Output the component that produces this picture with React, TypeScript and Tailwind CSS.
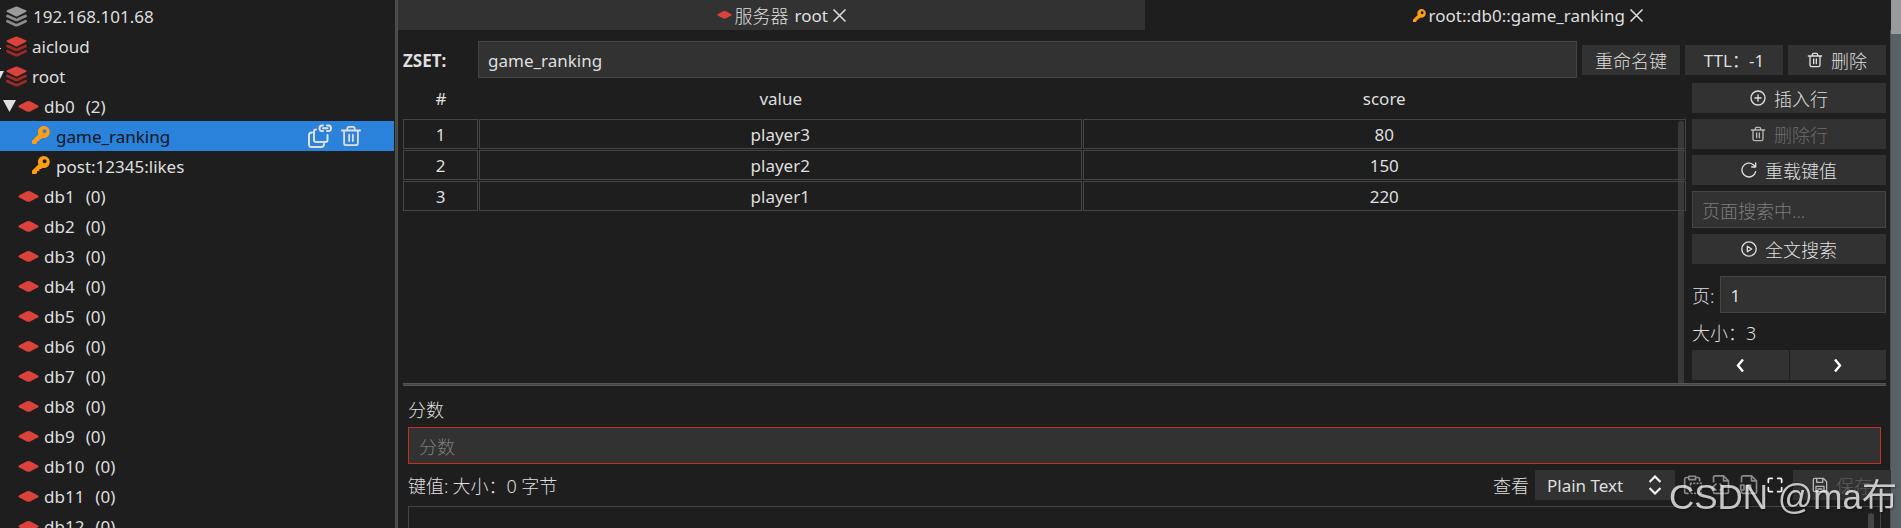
import React, { useState } from 'react';
import { createPortal } from 'react-dom';

interface KeyNode {
  name: string;
  selected?: boolean;
}

interface Row {
  id: number;
  value: string;
  score: number;
}

const KEYS: KeyNode[] = [
  { name: 'game_ranking', selected: true },
  { name: 'post:12345:likes' },
];

const EMPTY_DBS = ['db1', 'db2', 'db3', 'db4', 'db5', 'db6', 'db7', 'db8', 'db9', 'db10', 'db11', 'db12'];

const ROWS: Row[] = [
  { id: 1, value: 'player3', score: 80 },
  { id: 2, value: 'player2', score: 150 },
  { id: 3, value: 'player1', score: 220 },
];

const Stroke: React.FC<{
  className?: string;
  width?: number;
  children: React.ReactNode;
}> = ({ className = 'size-[18px]', width = 2, children }) => (
  <svg
    viewBox="0 0 24 24"
    fill="none"
    stroke="currentColor"
    strokeWidth={width}
    strokeLinecap="round"
    strokeLinejoin="round"
    className={`shrink-0 ${className}`}
    aria-hidden="true"
  >
    {children}
  </svg>
);

const ServerIcon: React.FC<{ offline?: boolean }> = ({ offline }) => (
  <svg viewBox="0 0 21 21" className="size-[21px] shrink-0" aria-hidden="true">
    <path
      d="M9.500 .7 Q10.500 .2 11.500 .7 L19.800 4.300 Q21.200 5.200 19.800 6.100 L11.500 10.200 Q10.500 10.700 9.500 10.200 L1.200 6.100 Q-.2 5.200 1.200 4.300 Z"
      fill={offline ? '#9b9b9b' : '#dc423c'}
    />
    <path
      d="M1.500 10 L9.500 13.600 Q10.500 14 11.500 13.600 L19.500 10 M1.500 15.200 L9.500 18.900 Q10.500 19.300 11.500 18.900 L19.500 15.200"
      fill="none"
      stroke={offline ? '#8c8c8c' : '#9e2a27'}
      strokeWidth="2.800"
      strokeLinecap="round"
    />
  </svg>
);

const DbIcon: React.FC<{ className?: string }> = ({ className = 'w-[21px]' }) => (
  <svg viewBox="0 0 21 11" className={`shrink-0 ${className}`} aria-hidden="true">
    <path
      d="M10.5 0 Q11.6 0 12.6 .4 L20 4.4 Q21.2 5.3 20 6.2 L12.6 10.2 Q10.5 11.2 8.4 10.2 L1 6.2 Q-.2 5.3 1 4.4 L8.4 .4 Q9.4 0 10.5 0 Z"
      fill="#dc423c"
    />
  </svg>
);

const KeyIcon: React.FC<{ className?: string }> = ({ className = 'size-[18px]' }) => (
  <svg viewBox="0 0 18 18" className={`shrink-0 ${className}`} aria-hidden="true">
    <path
      fillRule="evenodd"
      d="M11.8 0 A6 6 0 0 1 17.8 6 A6 6 0 0 1 10.4 11.8 L9.2 13 H7.4 V15 H5.2 V16.6 L4 18 H.8 Q0 18 0 17.2 V14.8 L6.4 8.4 A6 6 0 0 1 11.8 0 Z M12.6 3.2 A2 2 0 1 0 12.6 7.2 A2 2 0 1 0 12.6 3.2 Z"
      fill="#ff9e12"
    />
  </svg>
);

const TrashIcon: React.FC<{ className?: string }> = ({ className }) => (
  <Stroke className={className}>
    <path d="M2 6h20M8 6V4q0-2 2-2h4q2 0 2 2v2M4.500 6v13.500q0 2.500 2.500 2.500h10q2.500 0 2.500-2.500V6M10 10.500v7M14 10.500v7" />
  </Stroke>
);

const CopyLinkIcon = () => (
  <Stroke className="size-6" width={2}>
    <path d="M8 5.500q-2 0-2 2V16q0 2 2 2h9.500q2 0 2-2v-5M4 8.500q-3 0-3 2.500v9.500q0 2.500 2.500 2.500H13q3 0 3-3" />
    <path d="M15 1.500h-1q-2.500 0-2.500 2.800T14 7h1M19 1.500h1.500q2.500 0 2.500 2.800T20.500 7H19M15 4.300h4.500" />
  </Stroke>
);

const CloseIcon = () => (
  <svg viewBox="0 0 13 13" className="size-[13px]" stroke="currentColor" strokeWidth="1.500" aria-hidden="true">
    <path d="M.5 .5 12.500 12.500M12.500 .5 .5 12.500" />
  </svg>
);

const ActionButton: React.FC<{
  children: React.ReactNode;
  className?: string;
  disabled?: boolean;
  label?: string;
}> = ({ children, className = '', disabled, label }) => (
  <button
    type="button"
    disabled={disabled}
    aria-label={label}
    className={`flex h-[30px] items-center justify-center gap-2 bg-[#323232] ${className}`}
  >
    {children}
  </button>
);

const Caption: React.FC<{ className?: string; children: React.ReactNode }> = ({ className = '', children }) => (
  <span className={`pt-0.5 text-lg font-light leading-6 ${className}`}>{children}</span>
);

const DbLabel: React.FC<{ name: string; count: number }> = ({ name, count }) => (
  <span className="flex gap-[11px] pt-0.5">
    <span>{name}</span>
    <span>({count})</span>
  </span>
);

const Sidebar = () => (
  <nav className="w-[394px] shrink-0 overflow-hidden pt-px">
    <div className="flex h-[30px] items-center gap-1.5 pl-1.5">
      <ServerIcon offline />
      <span className="pt-0.5">192.168.101.68</span>
    </div>
    <div className="relative flex h-[30px] items-center gap-[5px] pl-1.5">
      <span className="absolute left-0 top-[17px] h-px w-px bg-[#dfdfdf]" />
      <ServerIcon />
      <span className="pt-0.5">aicloud</span>
    </div>
    <div className="relative flex h-[30px] items-center gap-[5px] pl-1.5">
      <svg viewBox="0 0 4 12" className="absolute left-0 top-2.5 h-3 w-1" aria-hidden="true">
        <path d="M0 0H4L0 8Z" fill="#dfdfdf" />
      </svg>
      <ServerIcon />
      <span className="pt-0.5">root</span>
    </div>
    <div className="flex h-[30px] items-center gap-[5px] pl-[3px]">
      <div className="flex items-center gap-0.5">
        <svg viewBox="0 0 13 12" className="h-3 w-[13px]" aria-hidden="true">
          <path d="M0 0H13L6.500 12Z" fill="#dfdfdf" />
        </svg>
        <DbIcon />
      </div>
      <DbLabel name="db0" count={2} />
    </div>
    {KEYS.map((k) => (
      <div
        key={k.name}
        className={`flex h-[30px] items-center gap-1.5 pl-8 ${k.selected ? 'bg-[#2a82da] text-[#10161d]' : ''}`}
      >
        <KeyIcon className="mb-0.5 size-[18px]" />
        <span className="pt-0.5">{k.name}</span>
        {k.selected && (
          <div className="ml-auto mr-8 flex items-center gap-2 text-[#dfdfdf]">
            <button type="button" aria-label="Copy key name">
              <CopyLinkIcon />
            </button>
            <button type="button" aria-label="Delete key">
              <TrashIcon className="size-[22px]" />
            </button>
          </div>
        )}
      </div>
    ))}
    {EMPTY_DBS.map((db) => (
      <div key={db} className="flex h-[30px] items-center gap-[5px] pl-[18px]">
        <DbIcon />
        <DbLabel name={db} count={0} />
      </div>
    ))}
  </nav>
);

const TabBar = () => (
  <div className="flex h-[30px]">
    <div className="flex flex-1 items-center justify-center gap-[3px] bg-[#323232] pl-5">
      <DbIcon className="w-[15px]" />
      <span className="flex gap-1.5 pt-0.5">
        <span className="text-lg font-light leading-6">服务器</span>
        <span>root</span>
      </span>
      <button type="button" aria-label="Close tab" className="pl-0.5">
        <CloseIcon />
      </button>
    </div>
    <div className="flex flex-1 items-center justify-center gap-[3px] pl-5">
      <KeyIcon className="size-[13px]" />
      <span className="pt-0.5">root::db0::game_ranking</span>
      <button type="button" aria-label="Close tab" className="pl-0.5">
        <CloseIcon />
      </button>
    </div>
  </div>
);

const KeyHeader = () => (
  <div className="flex items-center gap-[5px]">
    <label htmlFor="key-name" className="w-[70px] pt-0.5 font-bold">
      ZSET:
    </label>
    <input
      id="key-name"
      defaultValue="game_ranking"
      className="h-[37px] min-w-0 flex-1 border border-[#454545] bg-[#323232] px-[9px] pt-0.5 outline-none"
    />
    <ActionButton className="w-[98px]">
      <Caption>重命名键</Caption>
    </ActionButton>
    <ActionButton className="w-[98px]">
      <span className="pt-0.5">TTL：-1</span>
    </ActionButton>
    <ActionButton className="w-[98px]">
      <TrashIcon className="size-4" />
      <Caption>删除</Caption>
    </ActionButton>
  </div>
);

const ValueTable = () => (
  <div className="relative min-w-0 flex-1">
    <table className="w-full table-fixed border-separate border-spacing-0">
      <thead>
        <tr className="h-[36px]">
          <th className="w-[76px] p-0 pb-1 font-normal">#</th>
          <th className="p-0 pb-1 font-normal">value</th>
          <th className="p-0 pb-1 font-normal">score</th>
        </tr>
      </thead>
      <tbody className="text-center">
        {ROWS.map((r) => (
          <tr key={r.id}>
            {[r.id, r.value, r.score].map((cell, i) => (
              <td key={i} className="p-0 pb-px pr-px last:pr-0">
                <div className="h-[30px] border border-[#454545] leading-[30px]">{cell}</div>
              </td>
            ))}
          </tr>
        ))}
      </tbody>
    </table>
    <div className="absolute bottom-0 right-0.5 top-[38px] w-1.5 rounded-t bg-[#454545]/70" />
  </div>
);

const SidePanel = () => {
  const [page, setPage] = useState('1');

  return (
    <div className="flex w-[194px] shrink-0 flex-col gap-1.5 pb-[3px]">
      <ActionButton>
        <Stroke className="size-4">
          <circle cx="12" cy="12" r="10.500" />
          <path d="M12 7.500v9M7.500 12h9" />
        </Stroke>
        <Caption>插入行</Caption>
      </ActionButton>
      <ActionButton disabled>
        <TrashIcon className="size-4 text-[#b5b5b5]" />
        <Caption className="text-[#6b6b6b]">删除行</Caption>
      </ActionButton>
      <ActionButton>
        <Stroke className="size-4">
          <path d="M22 14.500A10.400 10.400 0 1 1 18.500 4L21.500 7M22 1.500V7.500H16" />
        </Stroke>
        <Caption>重载键值</Caption>
      </ActionButton>
      <input
        aria-label="页面搜索"
        placeholder="页面搜索中..."
        className="h-[37px] w-full border border-[#454545] bg-[#323232] px-[9px] pt-0.5 text-lg font-light outline-none placeholder:text-[#7d7d7d]"
      />
      <ActionButton>
        <Stroke className="size-4">
          <circle cx="12" cy="12" r="10.800" />
          <path d="M9.500 7.800v8.400L16 12Z" />
        </Stroke>
        <Caption>全文搜索</Caption>
      </ActionButton>
      <div className="mt-1.5 flex items-center gap-1.5">
        <label htmlFor="page" className="whitespace-nowrap pt-0.5 text-lg font-light leading-6">
          页:
        </label>
        <input
          id="page"
          value={page}
          onChange={(e) => setPage(e.target.value)}
          className="h-[37px] min-w-0 flex-1 border border-[#454545] bg-[#323232] px-[9px] pt-0.5 outline-none"
        />
      </div>
      <p className="h-[25px] text-lg font-light leading-[28px]">大小：3</p>
      <div className="flex gap-px">
        <ActionButton className="flex-1" label="Previous page">
          <svg viewBox="0 0 8 13" className="h-[13px] w-2" fill="none" stroke="#fff" strokeWidth="2.400" aria-hidden="true">
            <path d="M7 .5 2 6.500 7 12.500" />
          </svg>
        </ActionButton>
        <ActionButton className="flex-1" label="Next page">
          <svg viewBox="0 0 8 13" className="h-[13px] w-2" fill="none" stroke="#fff" strokeWidth="2.400" aria-hidden="true">
            <path d="M1 .5 6 6.500 1 12.500" />
          </svg>
        </ActionButton>
      </div>
    </div>
  );
};

const ValueToolbar = () => (
  <div className="-mr-2.5 flex h-[30px] items-center">
    <Caption>键值:</Caption>
    <Caption className="ml-1">大小：0 字节</Caption>
    <label htmlFor="view-as" className="ml-auto pt-0.5 text-lg font-light leading-6">
      查看
    </label>
    <div className="relative ml-1.5 w-[140px]">
      <select id="view-as" className="h-[30px] w-full appearance-none bg-[#323232] pl-3 pt-0.5 outline-none">
        <option>Plain Text</option>
      </select>
      <svg
        viewBox="0 0 12 20"
        className="pointer-events-none absolute right-3.5 top-[5px] h-5 w-3"
        fill="none"
        stroke="#f0f0f0"
        strokeWidth="2.200"
        aria-hidden="true"
      >
        <path d="M.5 7 6 1.500 11.500 7M.5 13 6 18.500 11.500 13" />
      </svg>
    </div>
    <div className="ml-2 flex items-center gap-2 text-[#8a8a8a]">
      <button type="button" disabled aria-label="Copy value">
        <Stroke className="size-5">
          <path d="M6 3H4Q2 3 2 5v15q0 2 2 2h2M16 3h2q2 0 2 2v2M7 1.500h8v4H7Z" />
          <path d="M9 10h13v12H9Z" strokeDasharray="1 3" />
        </Stroke>
      </button>
      <button type="button" disabled aria-label="Save value as formatted">
        <Stroke className="size-5">
          <path d="M3 8V3q0-2 2-2h10l6 6v13q0 2-2 2H5q-2 0-2-2M15 1v6h6M6 11l-4 3.500L6 18M11 11l4 3.500L11 18" />
        </Stroke>
      </button>
      <button type="button" disabled aria-label="Save raw value">
        <Stroke className="size-5">
          <path d="M3 8V3q0-2 2-2h10l6 6v13q0 2-2 2H5q-2 0-2-2M15 1v6h6M2 12h4v6H2ZM10 12h4v6h-4Z" />
        </Stroke>
      </button>
      <button type="button" aria-label="Full screen" className="text-[#f0f0f0]">
        <Stroke className="size-4" width={2.6}>
          <path d="M2 8V4q0-2 2-2h4M16 2h4q2 0 2 2v4M22 16v4q0 2-2 2h-4M8 22H4q-2 0-2-2v-4" />
        </Stroke>
      </button>
    </div>
    <ActionButton className="ml-2.5 w-[98px]" disabled>
      <Stroke className="size-4 text-[#b5b5b5]">
        <path d="M4 2h13l5 5v13q0 2-2 2H4q-2 0-2-2V4q0-2 2-2ZM7 2v6h9V2M6 22v-8h12v8M9 18h6" />
      </Stroke>
      <Caption className="text-[#5c5c5c]">保存</Caption>
    </ActionButton>
  </div>
);

const App = () => (
  <div
    className="flex h-screen overflow-hidden bg-[#1e1e1e] text-[17px] leading-6 text-[#dfdfdf]"
    style={{ fontFamily: '"Noto Sans", "Noto Sans CJK SC", sans-serif' }}
  >
    <Sidebar />
    <div className="ml-px w-[3px] shrink-0 border-x border-[#505050] bg-[#454545]" />
    <main className="flex min-w-0 flex-1 flex-col">
      <TabBar />
      <div className="flex min-h-0 flex-1 flex-col border-r border-[#505050] pl-[5px] pr-1 pt-[11px]">
        <KeyHeader />
        <div className="mt-[5px] flex gap-1.5">
          <ValueTable />
          <SidePanel />
        </div>
        <div className="h-[3px] shrink-0 border-y border-[#555] bg-[#454545]" />
        <div className="flex flex-1 flex-col px-[5px] pt-3">
          <label htmlFor="score" className="text-lg font-light leading-6">
            分数
          </label>
          <input
            id="score"
            placeholder="分数"
            className="mb-1.5 mt-[5px] h-[37px] shrink-0 border border-[#cb2d24] bg-[#323232] px-2.5 pt-0.5 text-lg font-light outline-none placeholder:text-[#7d7d7d]"
          />
          <ValueToolbar />
          <div className="mt-1.5 flex flex-1 justify-end border border-b-0 border-[#454545] pr-1.5 pt-1.5">
            <div className="w-1.5 rounded-t bg-[#454545]" />
          </div>
        </div>
      </div>
    </main>
    <div className="w-2.5 shrink-0 bg-[#586266]">
      <div className="h-[34px] bg-[#989b9b]" />
    </div>
    {createPortal(
      <span
        className="pointer-events-none fixed bottom-0 right-1 text-[35px] leading-[62px] text-white/75 drop-shadow-[1px_1px_1px_#0008]"
        style={{ fontFamily: '"Liberation Sans", "Noto Sans CJK SC", sans-serif' }}
      >
        CSDN @ma布
      </span>,
      document.body,
    )}
  </div>
);

export default App;
